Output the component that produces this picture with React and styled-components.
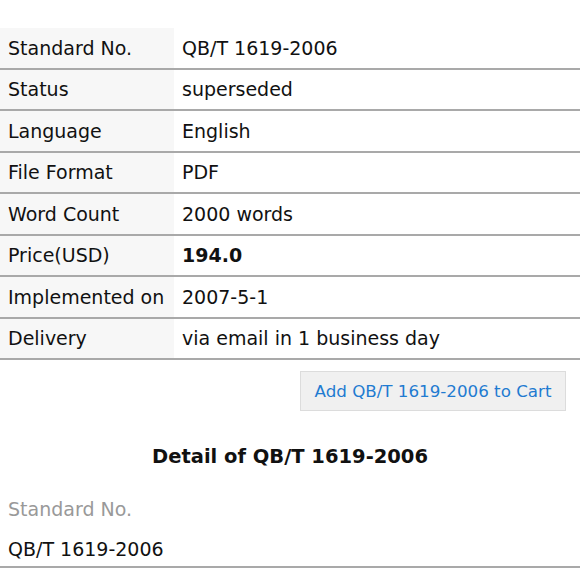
import styled, { createGlobalStyle } from "styled-components";

const GlobalStyle = createGlobalStyle`
  body {
    margin: 0;
    background: #fff;
    font-family: "DejaVu Sans", Verdana, sans-serif;
    color: #111;
  }
`;

const Page = styled.div`
  width: 580px;
  padding-top: 28px;
`;

const Table = styled.div`
  display: flex;
  flex-direction: column;
`;

const Row = styled.div`
  display: flex;
  height: 39.5px;
  border-bottom: 2px solid #a9a9a9;
`;

const Label = styled.div`
  width: 174px;
  background: #f7f7f7;
  padding-left: 8px;
  box-sizing: border-box;
  display: flex;
  align-items: center;
  font-size: 19px;
`;

const Value = styled.div`
  flex: 1;
  padding-left: 8px;
  display: flex;
  align-items: center;
  font-size: 19px;
  font-weight: ${(p) => (p.bold ? 700 : 400)};
`;

const Actions = styled.div`
  display: flex;
  justify-content: flex-end;
  padding: 11px 14px 0 0;
`;

const CartButton = styled.button`
  width: 266px;
  height: 40px;
  background: #f0f0f0;
  border: 1px solid #dcdcdc;
  color: #1f7bd1;
  font-family: "DejaVu Sans", Verdana, sans-serif;
  font-size: 16.7px;
  cursor: pointer;
`;

const Heading = styled.h2`
  margin: 34px 0 0;
  text-align: center;
  font-size: 19.5px;
  font-weight: 700;
  line-height: 24px;
`;

const Detail = styled.div`
  padding: 0 8px;
  margin-top: 28px;
  border-bottom: 2px solid #a9a9a9;
`;

const DetailLabel = styled.div`
  color: #999;
  font-size: 19px;
  line-height: 24px;
`;

const DetailValue = styled.div`
  font-size: 19px;
  line-height: 24px;
  margin-top: 16px;
  padding-bottom: 5px;
`;

const rows = [
  ["Standard No.", "QB/T 1619-2006"],
  ["Status", "superseded"],
  ["Language", "English"],
  ["File Format", "PDF"],
  ["Word Count", "2000 words"],
  ["Price(USD)", "194.0", true],
  ["Implemented on", "2007-5-1"],
  ["Delivery", "via email in 1 business day"],
];

export default function App() {
  return (
    <Page>
      <GlobalStyle />
      <Table>
        {rows.map(([label, value, bold]) => (
          <Row key={label}>
            <Label>{label}</Label>
            <Value bold={bold}>{value}</Value>
          </Row>
        ))}
      </Table>
      <Actions>
        <CartButton>Add QB/T 1619-2006 to Cart</CartButton>
      </Actions>
      <Heading>Detail of QB/T 1619-2006</Heading>
      <Detail>
        <DetailLabel>Standard No.</DetailLabel>
        <DetailValue>QB/T 1619-2006</DetailValue>
      </Detail>
    </Page>
  );
}
